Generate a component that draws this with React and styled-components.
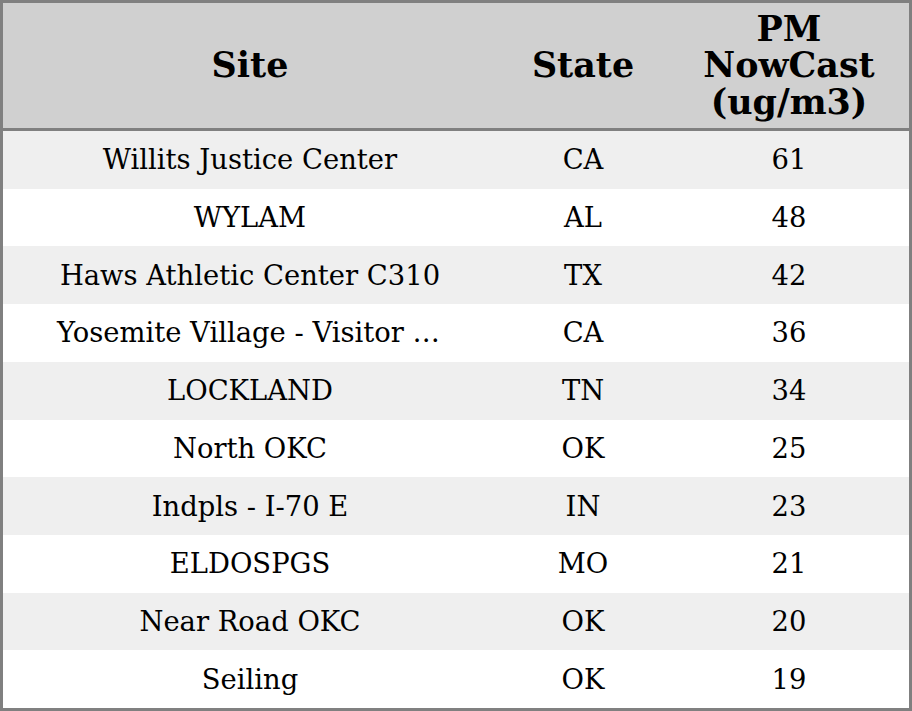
import React from 'react';
import styled, { createGlobalStyle } from 'styled-components';

const GlobalStyle = createGlobalStyle`
  html, body {
    margin: 0;
    padding: 0;
    background: #ffffff;
  }

  body {
    font-family: 'DejaVu Serif', 'Liberation Serif', serif;
    color: #000000;
  }
`;

const sites = [
  { name: 'Willits Justice Center', state: 'CA', value: 61 },
  { name: 'WYLAM', state: 'AL', value: 48 },
  { name: 'Haws Athletic Center C310', state: 'TX', value: 42 },
  { name: 'Yosemite Village - Visitor Center', state: 'CA', value: 36 },
  { name: 'LOCKLAND', state: 'TN', value: 34 },
  { name: 'North OKC', state: 'OK', value: 25 },
  { name: 'Indpls - I-70 E', state: 'IN', value: 23 },
  { name: 'ELDOSPGS', state: 'MO', value: 21 },
  { name: 'Near Road OKC', state: 'OK', value: 20 },
  { name: 'Seiling', state: 'OK', value: 19 },
];

const App = () => (
  <>
    <GlobalStyle />
    <Table>
      <HeaderRow>
        <HeadCell>Site</HeadCell>
        <HeadCell>State</HeadCell>
        <HeadCell>PM NowCast (ug/m3)</HeadCell>
      </HeaderRow>
      {sites.map((site, index) => (
        <BodyRow key={site.name} $striped={index % 2 === 0}>
          <Cell $wide>{site.name}</Cell>
          <Cell>{site.state}</Cell>
          <Cell>{site.value}</Cell>
        </BodyRow>
      ))}
    </Table>
  </>
);

export default App;

const Table = styled.div`
  box-sizing: border-box;
  width: 912px;
  height: 711px;
  border: 3px solid #808080;
  display: flex;
  flex-direction: column;
  overflow: hidden;
`;

const columns = '494px 172px 240px';

const HeaderRow = styled.div`
  display: grid;
  grid-template-columns: ${columns};
  flex: 0 0 125px;
  background: #d0d0d0;
  border-bottom: 3px solid #808080;
`;

const HeadCell = styled.div`
  align-self: center;
  padding: 0 16px;
  text-align: center;
  font-size: 34.9px;
  font-weight: bold;
  line-height: 36.6px;
`;

const BodyRow = styled.div`
  display: grid;
  grid-template-columns: ${columns};
  flex: 1 1 0;
  background: ${({ $striped }) => ($striped ? '#efefef' : '#ffffff')};
`;

const Cell = styled.div`
  align-self: center;
  padding: 0 ${({ $wide }) => ($wide ? '54px' : '8px')};
  text-align: center;
  font-size: 27.4px;
  white-space: nowrap;
  overflow: hidden;
  text-overflow: ellipsis;
`;
